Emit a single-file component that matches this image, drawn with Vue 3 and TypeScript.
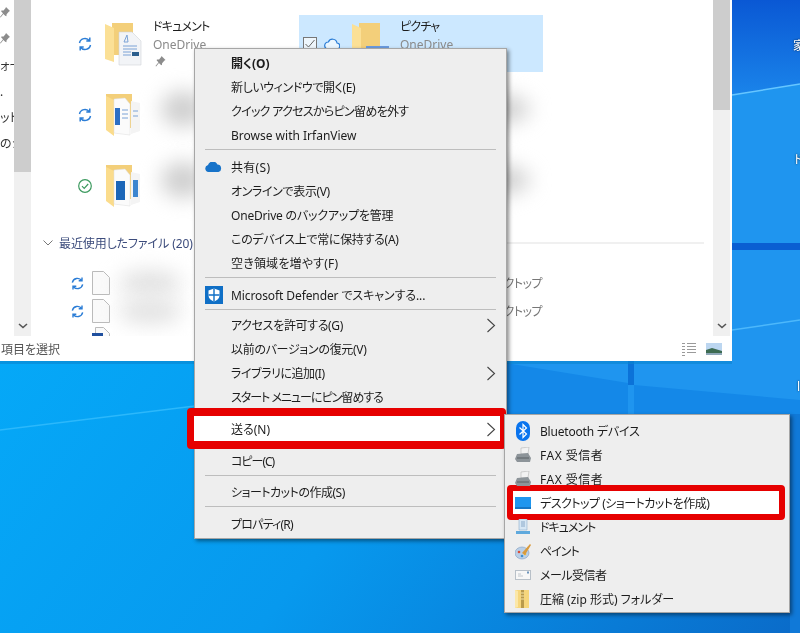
<script setup lang="ts">
type MenuRow = { label: string; bold?: boolean; icon?: string; arrow?: boolean; marked?: boolean; sep?: string; track?: number }

// track: the kana in the original menu font run narrower than Noto's
const contextMenu: MenuRow[] = [
  { label: '開く(O)', bold: true },
  { label: '新しいウィンドウで開く(E)', track: -0.4 },
  { label: 'クイック アクセスからピン留めを外す', track: -0.7 },
  { label: 'Browse with IrfanView', sep: 'sep' },
  { label: '共有(S)', icon: 'cloud', track: 0.3 },
  { label: 'オンラインで表示(V)', track: -0.36 },
  { label: 'OneDrive のバックアップを管理', track: -0.2 },
  { label: 'このデバイス上で常に保持する(A)', track: -0.3 },
  { label: '空き領域を増やす(F)', sep: 'sep', track: 0.2 },
  { label: 'Microsoft Defender でスキャンする...', icon: 'shield', sep: 'sep short', track: -0.1 },
  { label: 'アクセスを許可する(G)', arrow: true, track: -0.35 },
  { label: '以前のバージョンの復元(V)', track: -0.3 },
  { label: 'ライブラリに追加(I)', arrow: true, track: -0.45 },
  { label: 'スタート メニューにピン留めする', sep: 'sep', track: -1 },
  { label: '送る(N)', arrow: true, marked: true, sep: 'sep' },
  { label: 'コピー(C)', sep: 'sep snug', track: -1 },
  { label: 'ショートカットの作成(S)', sep: 'sep', track: -0.5 },
  { label: 'プロパティ(R)', track: -0.8 },
]

const sendTo: MenuRow[] = [
  { label: 'Bluetooth デバイス', icon: 'bluetooth', track: -0.2 },
  { label: 'FAX 受信者', icon: 'fax', track: 0.5 },
  { label: 'FAX 受信者', icon: 'fax', track: 0.5 },
  { label: 'デスクトップ (ショートカットを作成)', icon: 'desktop', marked: true, track: -0.5 },
  { label: 'ドキュメント', icon: 'docs', track: -1 },
  { label: 'ペイント', icon: 'paint', track: -1 },
  { label: 'メール受信者', icon: 'mail', track: -0.5 },
  { label: '圧縮 (zip 形式) フォルダー', icon: 'zip' },
]

const navLabels = ['', '', 'ォー', '.', 'ット', 'のシ']
</script>

<template>
  <div class="desktop">
    <svg class="wallpaper" width="800" height="633" viewBox="0 0 800 633">
      <defs>
        <linearGradient id="base" x1="0" y1="0.4" x2="1" y2="1">
          <stop offset="0" stop-color="#05abf9" />
          <stop offset="0.5" stop-color="#0799ee" />
          <stop offset="1" stop-color="#0a6bc9" />
        </linearGradient>
        <linearGradient id="pane-top" x1="0" y1="0" x2="0" y2="1">
          <stop offset="0" stop-color="#0a58d4" />
          <stop offset="1" stop-color="#1a84ea" />
        </linearGradient>
      </defs>
      <rect width="800" height="633" fill="url(#base)" />
      <rect x="500" y="0" width="300" height="414" fill="#1f95ef" />
      <polygon points="732,0 800,0 800,84 732,95" fill="url(#pane-top)" />
      <polyline points="732,95 800,84" stroke="#66c6ff" stroke-width="1.5" fill="none" />
      <rect x="732" y="243" width="68" height="7" fill="#0a5ed2" />
      <polyline points="732,330 800,320" stroke="#4db8fb" stroke-width="1.5" fill="none" />
      <polygon points="500,362 628,383 628,414 500,414" fill="#1488e8" />
      <polygon points="634,385 800,400 800,414 634,414" fill="#1488e8" />
      <rect x="628" y="361" width="6" height="24" fill="#0b72d8" />
      <rect x="790" y="414" width="10" height="219" fill="#1079d8" />
      <polyline points="0,430 195,406" stroke="#2cb8fb" stroke-width="1.5" fill="none" />
      <rect x="0" y="361" width="732" height="3" fill="#0a86cf" opacity="0.6" />
    </svg>

    <span class="desk-label label-a">家</span>
    <span class="desk-label label-b">ド</span>
    <span class="desk-label label-c">l</span>

    <section class="explorer">
      <div class="explorer-body">
        <nav class="nav-pane">
          <div v-for="(text, i) in navLabels" :key="i" class="nav-row">
            <svg v-if="!text" width="10" height="12" viewBox="0 0 10 12"><path d="M6 0l4 4-1 .6-2.400 2.600-.2 2-1.200-.4L3.400 7 .6 10.600 0 10l3-3.800L1.200 4.400l.2-.8 2.200-.2L5.600 1z" fill="#8c8c8c" /></svg>
            <span v-else>{{ text }}</span>
          </div>
        </nav>
        <div class="scrollbar scrollbar-left">
          <div class="thumb thumb-left"></div>
          <svg class="scroll-arrow" width="10" height="6" viewBox="0 0 10 6"><path d="M1 1l4 3.500L9 1" stroke="#555" stroke-width="1.600" fill="none" /></svg>
        </div>

        <main class="content">
          <div class="tile-grid">
            <div class="tile">
              <span class="check-slot"></span>
              <svg class="status" width="16" height="16" viewBox="0 0 16 16"><path d="M2.500 7a5.500 5.500 0 0 1 10-2M13.500 9a5.500 5.500 0 0 1-10 2M12.800 1.500v3.500H9.300M3.200 14.500V11h3.500" stroke="#2b7dd6" stroke-width="1.500" fill="none" /></svg>
              <svg class="folder" width="37" height="44" viewBox="0 0 37 44">
                <path d="M7 1h21v32H7z" fill="#f3cf7a" />
                <path d="M0 2l9 4v34l-9-3z" fill="#fbe096" />
                <path d="M14 10h13l9 9v24H14z" fill="#f2f4f7" stroke="#d0d3d8" stroke-width="0.600" />
                <path d="M19 20l3-7 1 7zM18 24h14M18 27h14M18 30h8M18 33h8" stroke="#7aa2d6" fill="none" />
                <rect x="27" y="30" width="7" height="4" fill="#2c5f8e" />
              </svg>
              <div class="tile-text">
                <div class="tile-name squeezed">ドキュメント</div>
                <div class="tile-sub">OneDrive</div>
                <svg class="tile-pin" width="11" height="12" viewBox="0 0 10 12"><path d="M6 0l4 4-1 .6-2.400 2.600-.2 2-1.200-.4L3.400 7 .6 10.600 0 10l3-3.800L1.200 4.400l.2-.8 2.200-.2L5.600 1z" fill="#8c8c8c" /></svg>
              </div>
            </div>

            <div class="tile tile-selected">
              <span class="check-slot check-box">
                <svg width="14" height="14" viewBox="0 0 14 14"><rect x="0.500" y="0.500" width="13" height="13" fill="#eef6fc" stroke="#777" /><path d="M2.500 7l3 3 6-7" stroke="#666" fill="none" /></svg>
              </span>
              <svg class="status" width="16" height="16" viewBox="0 0 16 16"><path d="M4 13h8.500a3 3 0 0 0 .5-6 4.500 4.500 0 0 0-8.600-1A3.500 3.500 0 0 0 4 13z" fill="#eaf6ff" stroke="#2b7dd6" stroke-width="1.200" /></svg>
              <svg class="folder" width="37" height="44" viewBox="0 0 37 44">
                <path d="M7 1h21v32H7z" fill="#f3cf7a" />
                <path d="M0 2l9 4v34l-9-3z" fill="#fbe096" />
                <rect x="14" y="24" width="26" height="20" fill="#6b9bdf" />
              </svg>
              <div class="tile-text">
                <div class="tile-name squeezed">ピクチャ</div>
                <div class="tile-sub">OneDrive</div>
              </div>
            </div>

            <div class="tile">
              <span class="check-slot"></span>
              <svg class="status" width="16" height="16" viewBox="0 0 16 16"><path d="M2.500 7a5.500 5.500 0 0 1 10-2M13.500 9a5.500 5.500 0 0 1-10 2M12.800 1.500v3.500H9.300M3.200 14.500V11h3.500" stroke="#2b7dd6" stroke-width="1.500" fill="none" /></svg>
              <svg class="folder" width="37" height="44" viewBox="0 0 37 44">
                <path d="M1 1h26v34H1z" fill="#f3cf7a" />
                <path d="M1 3l8 4v36l-8-6z" fill="#fbdc8c" />
                <path d="M9 6l11-1 5 6v31l-16-2z" fill="#fbfbfb" stroke="#ddd" stroke-width="0.500" />
                <path d="M26 8l9 2v28l-9 3z" fill="#f4f4f4" />
                <path d="M10 15h5v17h-5z" fill="#2c6fc4" />
                <path d="M17 17h6M17 21h6M17 25h6M28 18h5M28 23h5" stroke="#7aa2d6" />
              </svg>
              <div class="tile-text"><div class="smudge"></div></div>
            </div>

            <div class="tile">
              <span class="check-slot"></span>
              <span class="status"></span>
              <span class="folder"></span>
              <div class="tile-text"><div class="smudge smudge-wide"></div></div>
            </div>

            <div class="tile">
              <span class="check-slot"></span>
              <svg class="status" width="16" height="16" viewBox="0 0 16 16"><circle cx="8" cy="8" r="6.300" fill="none" stroke="#3c9a5f" stroke-width="1.200" /><path d="M5 8.200l2.200 2.200L11.200 6" stroke="#3c9a5f" stroke-width="1.200" fill="none" /></svg>
              <svg class="folder" width="37" height="44" viewBox="0 0 37 44">
                <path d="M1 1h26v34H1z" fill="#f3cf7a" />
                <path d="M1 3l8 4v36l-8-6z" fill="#fbdc8c" />
                <path d="M9 6l11-1 5 6v31l-16-2z" fill="#fbfbfb" stroke="#ddd" stroke-width="0.500" />
                <path d="M26 8l9 2v28l-9 3z" fill="#f4f4f4" />
                <path d="M11 17h9v19h-9z" fill="#1c66b8" />
                <path d="M28 16h5v17h-5z" fill="#3d86cf" />
              </svg>
              <div class="tile-text"><div class="smudge"></div></div>
            </div>

            <div class="tile">
              <span class="check-slot"></span>
              <span class="status"></span>
              <span class="folder"></span>
              <div class="tile-text"><div class="smudge smudge-wide"></div></div>
            </div>
          </div>

          <header class="section-head">
            <svg width="10" height="6" viewBox="0 0 10 6"><path d="M.5.500L5 5 9.500.500" stroke="#777" fill="none" /></svg>
            <span class="section-title">最近使用したファイル (20)</span>
            <span class="section-line"></span>
          </header>

          <div class="file-row">
            <svg class="file-status" width="15" height="15" viewBox="0 0 16 16"><path d="M2.500 7a5.500 5.500 0 0 1 10-2M13.500 9a5.500 5.500 0 0 1-10 2M12.800 1.500v3.500H9.300M3.200 14.500V11h3.500" stroke="#2b7dd6" stroke-width="1.500" fill="none" /></svg>
            <svg width="18" height="24" viewBox="0 0 18 24"><path d="M.5.500h11l6 6v17H.5z" fill="#fafafa" stroke="#bbb" /></svg>
            <div class="smudge smudge-file"></div>
            <span class="file-place">デスクトップ</span>
          </div>
          <div class="file-row">
            <svg class="file-status" width="15" height="15" viewBox="0 0 16 16"><path d="M2.500 7a5.500 5.500 0 0 1 10-2M13.500 9a5.500 5.500 0 0 1-10 2M12.800 1.500v3.500H9.300M3.200 14.500V11h3.500" stroke="#2b7dd6" stroke-width="1.500" fill="none" /></svg>
            <svg width="18" height="24" viewBox="0 0 18 24"><path d="M.5.500h11l6 6v17H.5z" fill="#fafafa" stroke="#bbb" /></svg>
            <div class="smudge smudge-file"></div>
            <span class="file-place">デスクトップ</span>
          </div>
          <div class="file-row">
            <span class="file-status"></span>
            <svg width="18" height="24" viewBox="0 0 18 24"><path d="M3.500.500h8l6 6v17h-14z" fill="#fafafa" stroke="#bbb" /><rect x="0" y="6" width="11" height="6" fill="#1f4f9e" /></svg>
          </div>
        </main>

        <div class="scrollbar scrollbar-right">
          <div class="thumb thumb-right"></div>
          <svg class="scroll-arrow" width="10" height="6" viewBox="0 0 10 6"><path d="M1 1l4 3.500L9 1" stroke="#555" stroke-width="1.600" fill="none" /></svg>
        </div>
      </div>

      <footer class="status-bar">
        <span>項目を選択</span>
        <div class="view-icons">
          <svg width="16" height="14" viewBox="0 0 16 14"><path d="M1 1.500h3M6 1.500h9M1 4.500h3M6 4.500h9M1 7.500h3M6 7.500h9M1 10.500h3M6 10.500h9M1 13.500h3" stroke="#9a9a9a" /></svg>
          <svg width="16" height="12" viewBox="0 0 16 12"><rect width="16" height="12" fill="#bcd6f0" /><path d="M0 7l6-2 10 3v4H0z" fill="#3d6b52" /><rect y="10" width="16" height="2" fill="#8fa8b8" /></svg>
        </div>
      </footer>
    </section>

    <div class="menu main-menu">
      <template v-for="row in contextMenu" :key="row.label">
        <div class="menu-row" :class="{ marked: row.marked, strong: row.bold }">
          <span class="menu-icon">
            <svg v-if="row.icon === 'cloud'" width="17" height="10" viewBox="0 0 17 10"><path d="M3.500 10A3.500 3.500 0 0 1 3 3.100 5 5 0 0 1 12.400 2.600 3.800 3.800 0 0 1 13.500 10z" fill="#1773c9" /></svg>
            <svg v-else-if="row.icon === 'shield'" width="18" height="18" viewBox="0 0 18 18"><rect width="18" height="18" fill="#0f6fc6" /><path d="M9 2.500l5.500 2v5c0 3-2.500 5-5.500 6-3-1-5.500-3-5.500-6v-5z" fill="#fff" /><path d="M9 2.500v13M3.500 9h11" stroke="#0f6fc6" stroke-width="1.400" /></svg>
          </span>
          <span class="menu-label" :style="{ letterSpacing: (row.track ?? 0) + 'px' }">{{ row.label }}</span>
          <svg v-if="row.arrow" class="menu-arrow" width="10" height="15" viewBox="0 0 10 15"><path d="M1.500 1l7 6.500-7 6.500" stroke="#444" stroke-width="1.100" fill="none" /></svg>
        </div>
        <div v-if="row.sep" :class="row.sep"></div>
      </template>
    </div>

    <div class="menu send-menu">
      <div v-for="(row, i) in sendTo" :key="i" class="menu-row" :class="{ marked: row.marked }">
        <span class="menu-icon">
          <svg v-if="row.icon === 'bluetooth'" width="16" height="20" viewBox="0 0 16 20"><rect x="1" y="0" width="14" height="20" rx="7" fill="#0a74ee" /><path d="M4.500 6.500l7 6.500L8 16.500v-13L11.500 7l-7 6.500" stroke="#fff" stroke-width="1.200" fill="none" /></svg>
          <svg v-else-if="row.icon === 'fax'" width="17" height="16" viewBox="0 0 17 16"><path d="M6 1l8-1-1 7H6z" fill="#f2f2f2" stroke="#aaa" stroke-width="0.500" /><path d="M2 7l11-1 3 5-1 4H2L0 12z" fill="#8d9499" /><path d="M2 11h12" stroke="#5a6065" /></svg>
          <svg v-else-if="row.icon === 'desktop'" width="16" height="12" viewBox="0 0 16 12"><rect width="16" height="12" fill="#1e96ee" /><rect y="10" width="16" height="2" fill="#1576c4" /></svg>
          <svg v-else-if="row.icon === 'docs'" width="16" height="16" viewBox="0 0 16 16"><path d="M4 0h8v11H4z" fill="#d6e6f4" stroke="#8fb0cc" stroke-width="0.600" /><path d="M6 3h4M6 5h4M6 7h4" stroke="#88a8c8" /><path d="M1 12h14v3H1z" fill="#5fa9dd" /></svg>
          <svg v-else-if="row.icon === 'paint'" width="17" height="17" viewBox="0 0 17 17"><ellipse cx="7" cy="10" rx="7" ry="6" fill="#b9cfe6" stroke="#7f9cc0" stroke-width="0.600" /><circle cx="4" cy="9" r="1.300" fill="#d94f3a" /><circle cx="7" cy="13" r="1.300" fill="#3f8fd0" /><circle cx="10" cy="11" r="1.300" fill="#f0c040" /><path d="M7 10l8-9 1 1-6 10z" fill="#d99a3c" /></svg>
          <svg v-else-if="row.icon === 'mail'" width="16" height="10" viewBox="0 0 16 10"><rect x="0.500" y="0.500" width="15" height="9" fill="#f7f7f7" stroke="#b8c0c8" /><path d="M3 6h5M3 4h3" stroke="#c0c6cc" /><rect x="12" y="1.500" width="2" height="2" fill="#6c94bc" /></svg>
          <svg v-else-if="row.icon === 'zip'" width="14" height="18" viewBox="0 0 14 18"><rect width="14" height="18" fill="#f6d67c" /><path d="M0 0l3 1v16l-3 1z" fill="#fbe7a8" /><rect x="6" y="0" width="3" height="18" fill="#b99a4c" /><path d="M6 3h3M6 6h3M6 9h3" stroke="#f2e2a8" /></svg>
        </span>
        <span class="menu-label" :style="{ letterSpacing: (row.track ?? 0) + 'px' }">{{ row.label }}</span>
      </div>
    </div>
  </div>
</template>

<style scoped>
.desktop {
  position: relative;
  width: 800px;
  height: 633px;
  overflow: hidden;
  font-family: "Noto Sans", "Noto Sans CJK JP", sans-serif;
  font-feature-settings: "palt";
  font-size: 12px;
  color: #1c1c1c;
  filter: blur(0.3px);
}

.wallpaper {
  position: absolute;
  left: 0;
  top: 0;
}

.desk-label {
  position: absolute;
  color: #fff;
  font-size: 12px;
  text-shadow: 0 0 2px #123;
}
.label-a { left: 793px; top: 36px; }
.label-b { left: 794px; top: 150px; }
.label-c { left: 797px; top: 378px; }

.explorer {
  position: absolute;
  left: 0;
  top: 0;
  width: 732px;
  height: 361px;
  background: #fff;
  display: flex;
  flex-direction: column;
}

.explorer-body {
  display: flex;
  height: 336px;
}

.nav-pane {
  width: 14px;
  overflow: hidden;
}

.nav-row {
  height: 26px;
  display: flex;
  align-items: center;
  white-space: nowrap;
  color: #333;
}

.scrollbar {
  width: 17px;
  background: #f0f0f0;
  display: flex;
  flex-direction: column;
  align-items: center;
}

.scrollbar-right {
  margin-right: 2px;
}

.thumb {
  width: 100%;
  background: #cdcdcd;
}
.thumb-left { height: 172px; }
.thumb-right { height: 110px; }

.scroll-arrow {
  margin-top: auto;
  margin-bottom: 7px;
}

.content {
  flex: 1;
  min-width: 0;
  padding: 15px 0 0 21px;
  overflow: hidden;
}

.tile-grid {
  display: grid;
  grid-template-columns: 244px 244px;
  grid-auto-rows: 57px;
  column-gap: 3px;
  row-gap: 14px;
}

.tile {
  display: flex;
  align-items: center;
  padding-left: 4px;
}

.tile-selected {
  background: #cce8ff;
}

.check-slot {
  width: 14px;
  height: 14px;
  flex: none;
}
.check-box svg {
  display: block;
}

.status {
  width: 16px;
  flex: none;
  margin-left: 7px;
}

.folder {
  width: 37px;
  flex: none;
  margin-left: 12px;
}

.tile-text {
  margin-left: 11px;
  flex: 1;
  min-width: 0;
  align-self: flex-start;
  padding-top: 3px;
}

.tile-name {
  line-height: 17px;
}

.squeezed {
  letter-spacing: -0.8px;
}

.tile-sub {
  line-height: 20px;
  color: #8a8a8a;
}

.tile-pin {
  display: block;
  margin: 1px 0 0 2px;
}

.smudge {
  width: 44px;
  height: 36px;
  margin: 2px 0 0 8px;
  background: #cfcfcf;
  border-radius: 50%;
  filter: blur(10px);
}

.smudge-wide {
  width: 120px;
  margin-left: 10px;
  background: #d0d0d0;
}

.smudge-file {
  width: 64px;
  height: 26px;
  margin: 0 0 0 8px;
  background: #e2e2e2;
}

.section-head {
  display: flex;
  align-items: center;
  height: 20px;
  margin-top: 19px;
  margin-left: -9px;
  gap: 6px;
  padding-right: 9px;
}

.section-title {
  color: #3c4c7c;
  font-size: 12px;
  letter-spacing: -0.1px;
  white-space: nowrap;
}

.section-line {
  flex: 1;
  height: 2px;
  background: #f0f0f0;
  margin-left: 6px;
}

.file-row {
  display: flex;
  align-items: center;
  height: 28px;
  width: 472px;
  margin-left: 18px;
}
.section-head + .file-row {
  margin-top: 16px;
}

.file-status {
  width: 15px;
  flex: none;
  margin-right: 7px;
}

.file-place {
  margin-left: auto;
  color: #777;
  letter-spacing: -0.5px;
}

.status-bar {
  height: 25px;
  display: flex;
  align-items: center;
  padding: 0 10px 0 1px;
  color: #555;
}

.view-icons {
  margin-left: auto;
  display: flex;
  align-items: center;
  gap: 9px;
}

.menu {
  position: absolute;
  background: #eeeeee;
  border: 1px solid #a6a6a6;
  box-shadow: 2px 2px 4px rgba(0, 0, 0, 0.45);
}

.main-menu {
  left: 194px;
  top: 48px;
  width: 311px;
  padding: 2px 0;
}

.send-menu {
  left: 504px;
  top: 414px;
  width: 284px;
  padding: 4px 0 1px;
}

.menu-row {
  position: relative;
  display: flex;
  align-items: center;
  height: 24px;
  padding-left: 10px;
  padding-right: 10px;
  white-space: nowrap;
}

.menu-icon,
.menu-label,
.menu-arrow {
  position: relative;
  z-index: 1;
}

.menu-icon {
  width: 18px;
  flex: none;
  display: flex;
  align-items: center;
  justify-content: flex-start;
}

.menu-label {
  margin-left: 8px;
}

.send-menu .menu-label {
  margin-left: 7px;
}

.strong {
  font-weight: 700;
}

.menu-arrow {
  margin-left: auto;
}

.sep {
  box-sizing: border-box;
  height: 8px;
  padding-top: 2px;
  margin: 0 10px;
}
.sep::before {
  content: "";
  display: block;
  height: 1px;
  background: #bdbdbd;
}

.short {
  height: 6px;
}

.snug {
  height: 7px;
}

.marked::after {
  content: "";
  position: absolute;
  background: #fff;
  border-style: solid;
  border-color: #e60000;
  border-radius: 4px;
}

.main-menu .marked::after {
  left: -8px;
  right: 0;
  top: -9px;
  bottom: -8px;
  border-width: 8px 6px 8px 7px;
}

.send-menu .marked::after {
  left: 2px;
  right: 4px;
  top: -6px;
  bottom: -5px;
  border-width: 6px;
}
</style>

<style>
html,
body {
  background: #0a6bc9;
}
</style>
